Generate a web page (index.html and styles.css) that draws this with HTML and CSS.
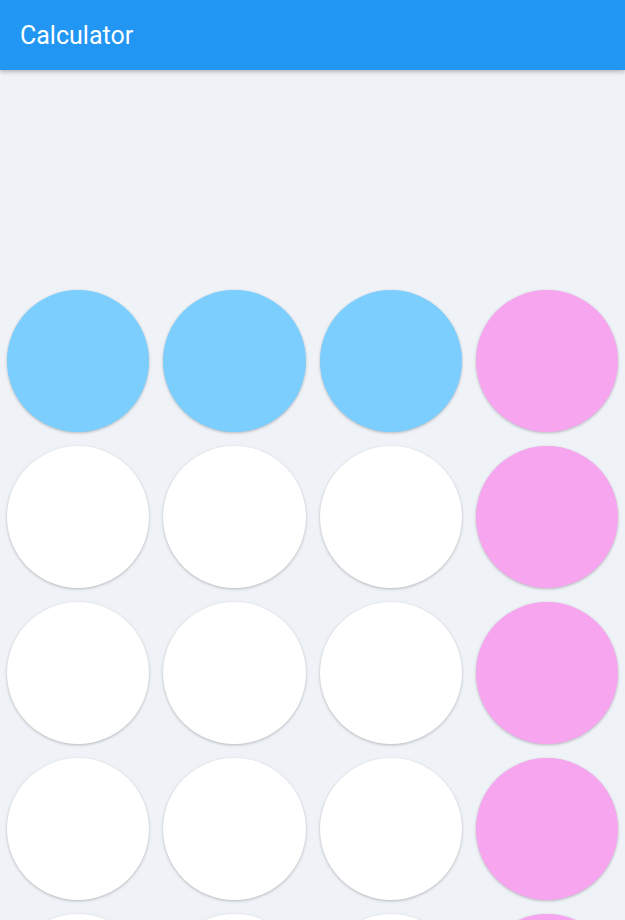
FILE: index.html
```html
<!DOCTYPE html>
<html lang="en">
<head>
    <meta charset="UTF-8">
    <meta name="viewport" content="width=device-width, initial-scale=1.0">
    <title>Calculator</title>
    <link rel="stylesheet" href="styles.css">
</head>
<body>

    <!-- App bar -->
    <header class="app-bar">
        <h1 class="app-title">Calculator</h1>
    </header>

    <!-- Display area -->
    <div class="display"></div>

    <!-- Keypad -->
    <div class="keypad">
        <button class="key key-func"></button>
        <button class="key key-func"></button>
        <button class="key key-func"></button>
        <button class="key key-op"></button>

        <button class="key"></button>
        <button class="key"></button>
        <button class="key"></button>
        <button class="key key-op"></button>

        <button class="key"></button>
        <button class="key"></button>
        <button class="key"></button>
        <button class="key key-op"></button>

        <button class="key"></button>
        <button class="key"></button>
        <button class="key"></button>
        <button class="key key-op"></button>

        <button class="key"></button>
        <button class="key"></button>
        <button class="key"></button>
        <button class="key key-op"></button>
    </div>

</body>
</html>
```

FILE: styles.css
```css
html, body {
    height: 100%;
}

body {
    font-family: Roboto, "Liberation Sans", sans-serif;
    margin: 0;
    padding: 0;
    background-color: #eff3f8;
    overflow: hidden;
}

/* App bar */
.app-bar {
    height: 70px;
    background-color: #2196f3;
    box-shadow: 0 2px 4px rgba(0, 0, 0, 0.25);
    display: flex;
    align-items: center;
    padding: 0 20px;
    position: relative;
    z-index: 1;
}

.app-title {
    margin: 0;
    color: #fff;
    font-size: 25px;
    font-weight: 400;
}

/* Display area */
.display {
    height: 213px;
}

/* Keypad */
.keypad {
    display: grid;
    grid-template-columns: repeat(4, 1fr);
    grid-auto-rows: 156px;
}

.key {
    margin: 7px;
    padding: 0;
    border: none;
    border-radius: 50%;
    background-color: #fff;
    box-shadow: 0 1px 3px rgba(0, 0, 0, 0.25);
    cursor: pointer;
}

.key-func {
    background-color: #7bcefe;
}

.key-op {
    background-color: #f7a5ef;
}
```
